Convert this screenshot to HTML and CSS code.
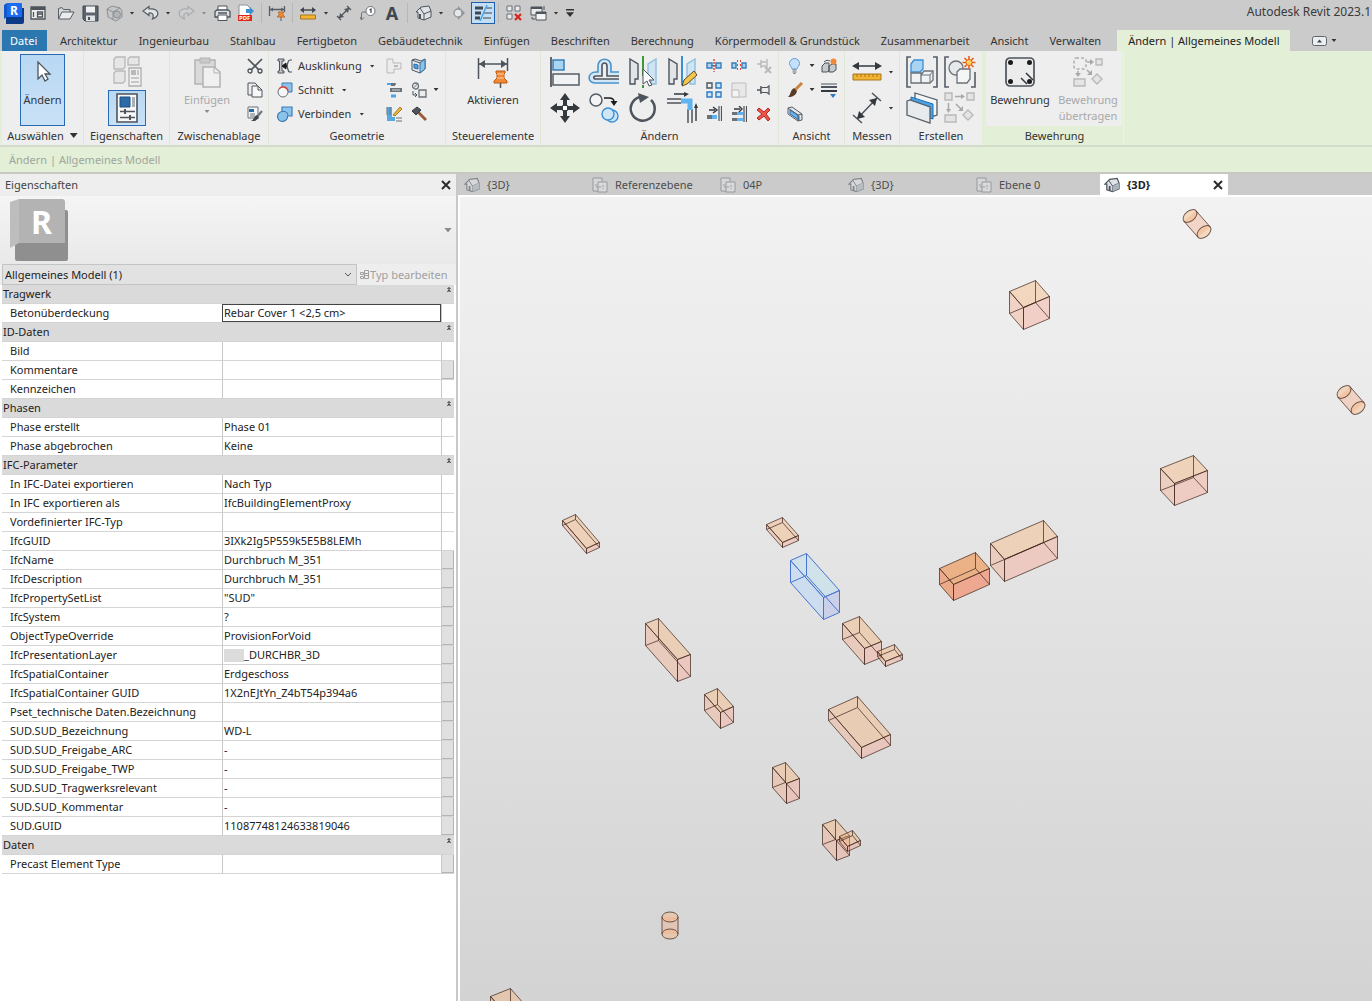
FILE: index.html
```html
<!DOCTYPE html>
<html lang="de">
<head>
  <meta charset="UTF-8">
  <meta name="viewport" content="width=device-width, initial-scale=1.0">
  <title>Autodesk Revit 2023.1</title>
  <link rel="stylesheet" href="styles.css">
</head>
<body>

  <header class="titlebar">
    <div class="quick-access">
      <button class="qa app" aria-label="Revit">
        <svg width="22" height="22" viewBox="0 0 22 22"><path d="M3 6h18v14a2 2 0 0 1-2 2H3z" fill="#0c3a86"/><path d="M1 3l3-2v14l-3 2z" fill="#1259c9"/><path d="M4 1h14a1 1 0 0 1 1 1v13H4z" fill="#1b6bf2"/><text x="7" y="13" class="logo-letter">R</text></svg>
      </button>
      <button class="qa" aria-label="Startseite">
        <svg width="16" height="16" viewBox="0 0 16 16"><path d="M1 2h14v12H1z" fill="#eee" stroke="#4d545c" stroke-width="1.300"/><path d="M1 2h14v3H1z" fill="#4d545c"/><path d="M3.500 7v5M7.500 7h5v5h-5zM7.500 9h5" stroke="#4d545c" stroke-width="1.300" fill="none"/></svg>
      </button>
      <span class="qa-gap"></span>
      <button class="qa" aria-label="Öffnen">
        <svg width="18" height="16" viewBox="0 0 18 16"><path d="M1.500 14V3.500L5 2.500l1.500 2H13V7" fill="#d5d8db" stroke="#555d66"/><path d="M1.500 14L5 7h12l-4 7z" fill="#e9ebec" stroke="#555d66"/></svg>
      </button>
      <button class="qa" aria-label="Speichern">
        <svg width="17" height="17" viewBox="0 0 17 17"><path d="M1 1h15v15H3l-2-2z" fill="#5c646d" stroke="#3f464d"/><path d="M4 1.500h9v6H4z" fill="#eef0f2"/><path d="M4 10.500h9V16H4z" fill="#dfe2e5"/><path d="M6 12h2v3H6z" fill="#4d545c"/></svg>
      </button>
      <button class="qa" aria-label="Synchronisieren" disabled>
        <svg width="17" height="17" viewBox="0 0 17 17"><path d="M1 4l5-3 8 2 2 3v6l-6 4-8-4z" fill="#c4c6c8" stroke="#8d9093"/><path d="M1 4l6 3v8M7 7l7-4" stroke="#8d9093" fill="none"/><circle cx="11" cy="9.500" r="3.500" fill="#b2b5b8" stroke="#8d9093"/></svg>
      </button>
      <button class="qa-drop" aria-label="Synchronisieren Menü"><i class="caret"></i></button>
      <button class="qa" aria-label="Rückgängig">
        <svg width="17" height="16" viewBox="0 0 17 16"><path d="M7 1.500L1 6l6 4.500V8c4-.5 5 2 3.500 6 4-1.500 6-4 5-7-1-2.500-4-3.500-8.500-3z" fill="#e2e4e6" stroke="#555d66" stroke-width="1.200"/></svg>
      </button>
      <button class="qa-drop" aria-label="Rückgängig Menü"><i class="caret"></i></button>
      <button class="qa" aria-label="Wiederherstellen" disabled>
        <svg width="17" height="16" viewBox="0 0 17 16"><path d="M10 1.500L16 6l-6 4.500V8c-4-.5-5 2-3.500 6-4-1.500-6-4-5-7 1-2.500 4-3.500 8.500-3z" fill="#cdcfd0" stroke="#a9acae" stroke-width="1.200"/></svg>
      </button>
      <button class="qa-drop" aria-label="Wiederherstellen Menü"><i class="caret soft"></i></button>
      <button class="qa" aria-label="Drucken">
        <svg width="17" height="17" viewBox="0 0 17 17"><path d="M4 1h9v5H4z" fill="#fff" stroke="#4d545c"/><path d="M1 6.500l2-1.500h11l2 1.500V12H1z" fill="#dfe2e5" stroke="#4d545c" stroke-width="1.300"/><path d="M4 10h9v5.500H4z" fill="#fff" stroke="#4d545c"/><path d="M4 8h9" stroke="#4d545c" stroke-width="1.500"/></svg>
      </button>
      <button class="qa" aria-label="PDF">
        <svg width="18" height="18" viewBox="0 0 18 18"><path d="M2 1h8l3 3v12H2z" fill="#fff" stroke="#8d9399"/><path d="M9 5h4V3l4 4-4 4V9H9z" fill="#3c8fd0"/><path d="M1 11h14v6H1z" fill="#e2231a"/><text x="2" y="16" class="pdf-letter">PDF</text></svg>
      </button>
      <span class="qa-sep"></span>
      <button class="qa" aria-label="Steuerelemente aktivieren">
        <svg width="18" height="16" viewBox="0 0 18 16"><path d="M1.500 1v10M16.500 1v6M2 4.500h14" stroke="#555d66" stroke-width="1.300"/><path d="M2 4.500l3-2v4zM16 4.500l-3-2v4z" fill="#555d66"/><path d="M10 7h6l-1 1v2l2 2H9l2-2V8z" fill="#f08a36" stroke="#b85a14" stroke-width=".7"/><path d="M13 12v4" stroke="#555d66"/></svg>
      </button>
      <span class="qa-sep"></span>
      <button class="qa" aria-label="Messen">
        <svg width="16" height="14" viewBox="0 0 16 14"><path d="M2 4h12" stroke="#3f464d" stroke-width="1.400"/><path d="M0 4l4-3v6zM16 4l-4-3v6z" fill="#3f464d"/><path d="M.5 9h15v4H.5z" fill="#f3b434" stroke="#a8761a"/></svg>
      </button>
      <button class="qa-drop" aria-label="Messen Menü"><i class="caret"></i></button>
      <button class="qa" aria-label="Ausgerichtete Bemaßung">
        <svg width="16" height="16" viewBox="0 0 16 16"><path d="M3 13L13 3M1 11l4 4M11 1l4 4" stroke="#4d545c" stroke-width="1.300"/><path d="M3 13l1-5 4 4zM13 3l-1 5-4-4z" fill="#4d545c"/></svg>
      </button>
      <button class="qa" aria-label="Nach Kategorie beschriften">
        <svg width="16" height="16" viewBox="0 0 16 16"><circle cx="10.500" cy="6" r="4.500" fill="#fff" stroke="#6a727a"/><path d="M6 7H3c-1 0-1.500.5-1.500 2v5M0 12l1.500 3L4 12.500" stroke="#6a727a" fill="none"/><path d="M9.500 5l1.500-1v4" stroke="#3f464d" stroke-width="1.200" fill="none"/></svg>
      </button>
      <button class="qa text-tool" aria-label="Text">A</button>
      <span class="qa-sep"></span>
      <button class="qa" aria-label="3D-Ansicht">
        <svg width="17" height="16" viewBox="0 0 17 16"><path d="M1 7l5-5 8-1 2 5v6l-7 3-6-2V7z" fill="#dfe3e7" stroke="#4d545c"/><path d="M1 7l4-4 4 6v6M9 9l7-3" stroke="#4d545c" fill="none"/><path d="M5 9v5" stroke="#4d545c" stroke-width="2"/></svg>
      </button>
      <button class="qa-drop" aria-label="3D-Ansicht Menü"><i class="caret"></i></button>
      <button class="qa" aria-label="Schnitt">
        <svg width="14" height="14" viewBox="0 0 14 14"><path d="M6 0l7 7-7 7z" fill="#8f959b"/><circle cx="6" cy="7" r="4" fill="#e4e6e8" stroke="#8f959b" stroke-width="1.300"/></svg>
      </button>
      <button class="qa qa-on" aria-label="Dünne Linien">
        <svg width="17" height="16" viewBox="0 0 17 16"><path d="M0 3h8M0 8h6M0 13h5" stroke="#3f464d" stroke-width="3"/><path d="M11 3h6M9 8h8M8 13h8" stroke="#3f464d"/><path d="M12 0L5 16" stroke="#4aa3e6" stroke-width="1.500"/></svg>
      </button>
      <span class="qa-sep"></span>
      <button class="qa" aria-label="Inaktive Ansichten schließen">
        <svg width="16" height="16" viewBox="0 0 16 16"><path d="M1 1h5v5H1zM9 1h5v5H9zM1 9h5v5H1z" fill="#e9ebec" stroke="#6a727a"/><path d="M9 9l6 6M15 9l-6 6" stroke="#d9261c" stroke-width="2.200"/></svg>
      </button>
      <button class="qa" aria-label="Fenster wechseln">
        <svg width="17" height="16" viewBox="0 0 17 16"><path d="M1 2h11v8H1z" fill="#e9ebec" stroke="#4d545c"/><path d="M1 2h11v2H1z" fill="#4d545c"/><path d="M6 7h10v8H6z" fill="#f4f5f5" stroke="#4d545c"/><path d="M6 7h10v2H6z" fill="#4d545c"/><path d="M2 12v2h3M14 1v4" stroke="#4d545c" fill="none"/></svg>
      </button>
      <button class="qa-drop" aria-label="Fenster Menü"><i class="caret"></i></button>
      <button class="qa-drop last" aria-label="Schnellzugriff anpassen"><i class="caret wide lined"></i></button>
    </div>
    <div class="app-title">Autodesk Revit 2023.1</div>
  </header>

  <nav class="tabs">
    <a href="#" class="file">Datei</a>
    <a href="#">Architektur</a>
    <a href="#">Ingenieurbau</a>
    <a href="#">Stahlbau</a>
    <a href="#">Fertigbeton</a>
    <a href="#">Gebäudetechnik</a>
    <a href="#">Einfügen</a>
    <a href="#">Beschriften</a>
    <a href="#">Berechnung</a>
    <a href="#">Körpermodell &amp; Grundstück</a>
    <a href="#">Zusammenarbeit</a>
    <a href="#">Ansicht</a>
    <a href="#">Verwalten</a>
    <a href="#" class="active">Ändern | Allgemeines Modell</a>
    <button class="ribbon-toggle" aria-label="Multifunktionsleiste minimieren">
      <svg width="15" height="10" viewBox="0 0 15 10"><rect x=".5" y=".5" width="14" height="9" rx="2" fill="#eceef0" stroke="#5c646d"/><path d="M5 6.500L7.500 3.500 10 6.500z" fill="#3f464d"/></svg>
      <i class="caret"></i>
    </button>
  </nav>

  <section class="ribbon">
    <div class="panel p-select">
      <div class="panel-body">
        <button class="large pressed">
          <svg width="32" height="32" viewBox="0 0 32 32"><path d="M11 6v17l4-4 3 6 3-2-3-5h5z" fill="#fff" stroke="#4d545c" stroke-width="1.300"/></svg>
          <span>Ändern</span>
        </button>
      </div>
      <div class="panel-title">Auswählen <i class="caret wide"></i></div>
    </div>

    <div class="panel p-props">
      <div class="panel-body stack">
        <button class="tool" aria-label="Typeneigenschaften" disabled>
          <svg width="32" height="32" viewBox="0 0 32 32"><path d="M3 3l2-2h9v10l-2 2H3zM17 3l2-2h9v8H17zM3 17l2-2h9v10l-2 2H3z" fill="#e6e6e6" stroke="#b9b9b9" stroke-width="1.300"/><path d="M18 12h12v18H18z" fill="#f0f0f0" stroke="#b0b0b0" stroke-width="1.300"/><path d="M20 14h5v5h-5z" fill="#b9b9b9"/><path d="M27 14v5M20 22h8M20 26h8" stroke="#b9b9b9" stroke-width="1.500"/></svg>
        </button>
        <button class="tool pressed wide-tool" aria-label="Eigenschaften">
          <svg width="32" height="32" viewBox="0 0 32 32"><path d="M6 2h20v28H6z" fill="#f7f7f7" stroke="#4d545c" stroke-width="1.600"/><path d="M9 5h10v10H9z" fill="#2c6aa8" stroke="#1f4f80"/><path d="M21 5h3v10h-3z" fill="#a9b0b7"/><path d="M9 19.500h15M9 25.500h15" stroke="#4d545c" stroke-width="1.300"/><path d="M14 17v5M19 23v5" stroke="#4d545c" stroke-width="2"/></svg>
        </button>
      </div>
      <div class="panel-title">Eigenschaften</div>
    </div>

    <div class="panel p-clip">
      <div class="panel-body">
        <button class="large" disabled>
          <svg width="32" height="32" viewBox="0 0 32 32"><path d="M4 4h20v24H4z" fill="#dadada" stroke="#b3b3b3" stroke-width="1.500"/><path d="M9 2h10v5H9z" fill="#c9c9c9" stroke="#b3b3b3"/><path d="M12 11h11l6 5v15H12z" fill="#f0f0f0" stroke="#b3b3b3" stroke-width="1.500"/><path d="M23 11v6h6" fill="none" stroke="#b3b3b3"/></svg>
          <span>Einfügen</span>
          <i class="caret soft"></i>
        </button>
        <div class="small-col">
          <button class="small" aria-label="Ausschneiden"><svg width="16" height="16" viewBox="0 0 16 16"><path d="M1 1l11 11M15 1L4 12" stroke="#4d545c" stroke-width="1.700"/><circle cx="3" cy="13" r="2" fill="none" stroke="#4d545c" stroke-width="1.300"/><circle cx="13" cy="13" r="2" fill="none" stroke="#4d545c" stroke-width="1.300"/></svg></button>
          <button class="small" aria-label="Kopieren"><svg width="16" height="16" viewBox="0 0 16 16"><path d="M1 1h7l2 2v10H1z" fill="#eee" stroke="#4d545c"/><path d="M5 4h6l4 4v7H5z" fill="#f7f7f7" stroke="#4d545c"/><path d="M11 4v4h4" fill="none" stroke="#4d545c"/></svg></button>
          <button class="small" aria-label="Eigenschaften anpassen"><svg width="16" height="16" viewBox="0 0 16 16"><path d="M1 1h10v11H1z" fill="#f4f4f4" stroke="#6a727a"/><path d="M2 3h5v3H2z" fill="#2c6aa8"/><path d="M3 8h5M3 10h5" stroke="#6a727a"/><path d="M15 5l-5 6" stroke="#6a727a" stroke-width="2"/><path d="M10 9l2 3-4 3H4c3-1 3-5 6-6z" fill="#3f464d"/></svg></button>
        </div>
      </div>
      <div class="panel-title">Zwischenablage</div>
    </div>

    <div class="panel p-geo">
      <div class="panel-body">
        <div class="small-col labelled">
          <button class="small"><svg width="16" height="16" viewBox="0 0 16 16"><path d="M1 1h6v2H5v10h2v2H1v-2h1.500V3H1z" fill="#c6cacd" stroke="#4d545c"/><path d="M15 2h-2c-3 0-1 4-4 6 3 1 1 6 4 6h2" fill="none" stroke="#4d545c" stroke-width="1.200"/><path d="M5 8l4-3v6zM8 8h3" fill="#1c1c1c" stroke="#1c1c1c"/></svg><span>Ausklinkung</span><i class="caret"></i></button>
          <button class="small"><svg width="16" height="16" viewBox="0 0 16 16"><path d="M5 1h10v9H5z" fill="#8cc3ea" stroke="#3a7db5"/><circle cx="6" cy="10" r="5" fill="#f6f6f6" stroke="#6a727a"/><path d="M2 7a5 5 0 0 1 9 2" fill="none" stroke="#e0453a" stroke-width="1.300"/></svg><span>Schnitt</span><i class="caret"></i></button>
          <button class="small"><svg width="16" height="16" viewBox="0 0 16 16"><path d="M5 1h10v9h-4.500A5 5 0 1 1 5 5.500z" fill="#8cc3ea" stroke="#3a7db5" stroke-width="1.200"/><path d="M5 5.500h3a4 4 0 0 1 3 4" fill="none" stroke="#3a7db5"/></svg><span>Verbinden</span><i class="caret"></i></button>
        </div>
        <div class="small-col">
          <button class="small" aria-label="Trägerverbindung" disabled><svg width="16" height="16" viewBox="0 0 16 16"><path d="M1 1h6v4h8v6H8v4H1z" fill="#ececec" stroke="#b9b9b9"/><path d="M8 8h4" stroke="#b9b9b9" stroke-width="2"/></svg></button>
          <button class="small" aria-label="Wandverbindung"><svg width="16" height="16" viewBox="0 0 16 16"><path d="M1 2h4M7 2h3" stroke="#4aa3e6" stroke-width="2"/><path d="M5 1h4v3H5zM4 6h12v4H4z" fill="#6a727a"/><path d="M6 8h8" stroke="#cfd3d6"/><path d="M5 14h5" stroke="#4aa3e6" stroke-width="3"/></svg></button>
          <button class="small" aria-label="Teilen"><svg width="16" height="16" viewBox="0 0 16 16"><path d="M1 1v14h8v-4H6V1z" fill="#58a9e0"/><path d="M1 1v8M4 1v8M10 12h6M10 15h6" stroke="#6a727a"/><path d="M7 9l7-8 2 2-7 7z" fill="#f3b434" stroke="#7a5a1a" stroke-width=".7"/></svg></button>
        </div>
        <div class="small-col">
          <button class="small" aria-label="Fläche teilen"><svg width="16" height="16" viewBox="0 0 16 16"><path d="M1 2l3-1 6 2 4-2v10l-5 4-8-3z" fill="#e6e9ec" stroke="#4d545c"/><path d="M9 5l5-4v10l-5 4z" fill="#8cc3ea" stroke="#3a6f9d"/><path d="M1 2l8 3" stroke="#4d545c"/><path d="M3 6l4 1v4l-4-1z" fill="#4aa3e6" stroke="#2c6aa8"/></svg></button>
          <button class="small" aria-label="Verbindung aufheben"><svg width="16" height="16" viewBox="0 0 16 16"><circle cx="4.500" cy="4" r="3" fill="#ececec" stroke="#6a727a" stroke-width="1.300"/><path d="M2.500 6l4-4" stroke="#6a727a"/><path d="M8 8h7v7H8z" fill="#ececec" stroke="#6a727a" stroke-width="1.300"/><path d="M2 9v4h4M4 11l2 2-2 2" fill="none" stroke="#4d545c"/></svg></button>
          <button class="small" aria-label="Abbruch"><svg width="16" height="16" viewBox="0 0 16 16"><path d="M7 6l8 8" stroke="#9a5b3c" stroke-width="3"/><path d="M1 5l5-4 4 3-5 5z" fill="#4d545c" stroke="#33393f"/></svg></button>
        </div>
        <div class="small-col carets">
          <i class="caret blank"></i>
          <i class="caret"></i>
          <i class="caret blank"></i>
        </div>
      </div>
      <div class="panel-title">Geometrie</div>
    </div>

    <div class="panel p-control">
      <div class="panel-body">
        <button class="large">
          <svg width="32" height="32" viewBox="0 0 32 32"><path d="M1.500 2v21M30.500 2v13M2 8h28" stroke="#4d545c" stroke-width="1.500"/><path d="M2 8l6-4v8zM30 8l-6-4v8z" fill="#4d545c"/><path d="M19 15h9v2l-1 1v4l3 3v2H17v-2l3-3v-4l-1-1z" fill="#f08a36" stroke="#b85a14"/><path d="M20 18h7M20 22h7" stroke="#ffd0a0"/><path d="M23.500 27v5" stroke="#4d545c" stroke-width="1.500"/></svg>
          <span>Aktivieren</span>
        </button>
      </div>
      <div class="panel-title">Steuerelemente</div>
    </div>

    <div class="panel p-modify">
      <div class="panel-body">
        <div class="large-grid">
          <button class="tool" aria-label="Ausrichten"><svg width="32" height="32" viewBox="0 0 32 32"><path d="M2 1v30" stroke="#33393f" stroke-width="1.500"/><path d="M4 4h11v10H4z" fill="#a9d4f2" stroke="#3a7db5" stroke-width="1.500"/><path d="M4 18h26v11H4z" fill="#f1f2f3" stroke="#555d66" stroke-width="1.500"/></svg></button>
          <button class="tool" aria-label="Versatz"><svg width="32" height="32" viewBox="0 0 32 32"><path d="M31 27H7c-8 0-8-11 1-11h2V10c0-9 13-9 13 0v6h8" fill="#d5e8f6" stroke="#4a93cb" stroke-width="1.600"/><path d="M31 23H8c-3 0-3-3 0-3h6V10c0-4 5-4 5 0v10h12" fill="#eee" stroke="#4d545c" stroke-width="1.600"/></svg></button>
          <button class="tool" aria-label="Spiegeln Achse wählen"><svg width="32" height="32" viewBox="0 0 32 32"><path d="M3 3l8 5v15H8v5H3z" fill="#e2e5e8" stroke="#4d545c" stroke-width="1.400"/><path d="M29 3l-8 5v15h3v5h5z" fill="#cfe4f3" stroke="#8fbfe0" stroke-width="1.400"/><path d="M16 0v20M16 29v3" stroke="#3d9a3a" stroke-width="2"/><path d="M16 13v15l4-3 2 5 3-1-3-5h5z" fill="#fff" stroke="#4d545c"/></svg></button>
          <button class="tool" aria-label="Spiegeln Achse zeichnen"><svg width="32" height="32" viewBox="0 0 32 32"><path d="M3 3l8 5v15H8v5H3z" fill="#e2e5e8" stroke="#4d545c" stroke-width="1.400"/><path d="M29 3l-8 5v15h3v5h5z" fill="#cfe4f3" stroke="#8fbfe0" stroke-width="1.400"/><path d="M16 0v29" stroke="#3a8fd6" stroke-width="2"/><path d="M16 30l2-6 10-9 3 4-10 9z" fill="#f7c548" stroke="#5a4a2a"/></svg></button>
          <button class="tool" aria-label="Verschieben"><svg width="32" height="32" viewBox="0 0 32 32"><path d="M16 1l5 7h-3v5h-4V8h-3zM16 31l5-7h-3v-5h-4v5h-3zM1 16l7-5v3h5v4H8v3zM31 16l-7-5v3h-5v4h5v3z" fill="#33393f"/><path d="M13.500 13.500h5v5h-5z" fill="#fff" stroke="#33393f"/></svg></button>
          <button class="tool" aria-label="Kopieren"><svg width="32" height="32" viewBox="0 0 32 32"><circle cx="8" cy="8" r="6" fill="#f4f4f4" stroke="#555d66" stroke-width="1.500"/><path d="M16 6h5c4 0 5 2 5 4" fill="none" stroke="#1c1c1c" stroke-width="1.500"/><path d="M22.500 9h7L26 14z" fill="#1c1c1c"/><circle cx="24" cy="24" r="6" fill="#cfe6f6" stroke="#3a8fd6" stroke-width="1.400"/><circle cx="20" cy="22" r="6" fill="#cfe6f6" stroke="#3a8fd6" stroke-width="1.400"/></svg></button>
          <button class="tool" aria-label="Drehen"><svg width="32" height="32" viewBox="0 0 32 32"><path d="M24 8a12 12 0 1 1-11-3" fill="none" stroke="#4d545c" stroke-width="2.500"/><path d="M11 1l11 4-9 6z" fill="#4d545c"/></svg></button>
          <button class="tool" aria-label="Stutzen"><svg width="32" height="32" viewBox="0 0 32 32"><path d="M1 7h14M1 11h14M22 17v14M26 17v14" stroke="#4d545c" stroke-width="1.500"/><path d="M15 9h9v9" fill="none" stroke="#5db4f0" stroke-width="5"/><path d="M8 2h12M30 29V14" stroke="#33393f" stroke-width="1.400"/><path d="M18 0l5 2-5 3zM28 16l2-5 2 5z" fill="#33393f"/></svg></button>
        </div>
        <div class="small-grid">
          <button class="small" aria-label="Element teilen"><svg width="16" height="16" viewBox="0 0 16 16"><path d="M1 5h5v5H1zM10 5h5v5h-5z" fill="#a9d4f2" stroke="#3a7db5" stroke-width="1.400"/><path d="M5 7.500h6" stroke="#3a7db5"/><path d="M8 1v13" stroke="#e0453a" stroke-width="1.400" stroke-dasharray="2 1"/></svg></button>
          <button class="small" aria-label="Mit Lücke teilen"><svg width="16" height="16" viewBox="0 0 16 16"><path d="M1 5h4v5H1zM11 5h4v5h-4z" fill="#a9d4f2" stroke="#3a7db5" stroke-width="1.400"/><path d="M6.500 2v12M9.500 2v12" stroke="#e0453a" stroke-dasharray="2 2"/></svg></button>
          <button class="small" aria-label="Lösen" disabled><svg width="16" height="16" viewBox="0 0 16 16"><path d="M1 6h4M5 2v8M5 4h5M5 8h5M11 1v9" stroke="#b9b9b9" stroke-width="1.400"/><path d="M9 9l6 6M15 9l-6 6" stroke="#b9b9b9" stroke-width="2"/></svg></button>
          <button class="small" aria-label="Reihe"><svg width="16" height="16" viewBox="0 0 16 16"><path d="M1 1h5v5H1z" fill="#eee" stroke="#4d545c" stroke-width="1.400"/><path d="M10 1h5v5h-5zM1 10h5v5H1zM10 10h5v5h-5z" fill="#cfe6f6" stroke="#2c7bc0" stroke-width="1.400"/></svg></button>
          <button class="small" aria-label="Maßstab" disabled><svg width="16" height="16" viewBox="0 0 16 16"><path d="M1 1h14v14H1z" fill="#e8e8e8" stroke="#bdbdbd"/><path d="M1 8h7v7H1z" fill="#f4f4f4" stroke="#bdbdbd"/></svg></button>
          <button class="small" aria-label="Fixieren"><svg width="16" height="16" viewBox="0 0 16 16"><path d="M1 8h4M5 4v8" stroke="#4d545c" stroke-width="1.400"/><path d="M5 6l2-.5h4L13 4v8l-2-1.500H7L5 10z" fill="#ececec" stroke="#4d545c" stroke-width="1.200"/></svg></button>
          <button class="small" aria-label="Einzelnes Element stutzen"><svg width="16" height="16" viewBox="0 0 16 16"><path d="M1 9h5v4H1z" fill="#6a727a"/><path d="M6 9h5v4H6z" fill="#5db4f0"/><path d="M13 0v15M15.500 0v15" stroke="#4d545c" stroke-width="1.200"/><path d="M3 4h6M7 1l4 3-4 3" fill="none" stroke="#33393f" stroke-width="1.400"/></svg></button>
          <button class="small" aria-label="Mehrere Elemente stutzen"><svg width="16" height="16" viewBox="0 0 16 16"><path d="M1 6h5v3H1zM1 12h5v3H1z" fill="#6a727a"/><path d="M6 6h6v3H6zM6 12h6v3H6z" fill="#5db4f0"/><path d="M13 0v16M15.500 0v16" stroke="#4d545c" stroke-width="1.200"/><path d="M3 3h6M8 0l3 3-3 3" fill="none" stroke="#33393f" stroke-width="1.400"/></svg></button>
          <button class="small" aria-label="Löschen"><svg width="16" height="16" viewBox="0 0 16 16"><path d="M3 2l5 4 4-4 2 2-4 4 4 5-2 2-4-5-5 4-2-2 5-4-5-4z" fill="#e8564c" stroke="#b8231a"/></svg></button>
        </div>
      </div>
      <div class="panel-title">Ändern</div>
    </div>

    <div class="panel p-view">
      <div class="panel-body">
        <div class="small-col">
          <button class="small" aria-label="Ausblenden"><svg width="16" height="16" viewBox="0 0 16 16"><path d="M5 11c0-2-2.500-3-2.500-5.500a5 5 0 0 1 10 0C12.500 8 10 9 10 11z" fill="#c4e0fa" stroke="#5f9fd6"/><path d="M5.500 12h4M5.500 14h4M6.500 15.500h2" stroke="#6a727a"/></svg></button>
          <button class="small" aria-label="Grafik überschreiben"><svg width="16" height="16" viewBox="0 0 16 16"><path d="M15 1L8 8" stroke="#c8833c" stroke-width="3"/><path d="M7 6l3 3c-1 4-4 6-9 6 3-2 2-7 6-9z" fill="#5a3a22"/></svg></button>
          <button class="small" aria-label="Auswahlbox"><svg width="16" height="16" viewBox="0 0 16 16"><path d="M1 2l4-1 10 7v6l-4 1L1 8z" fill="#e2e6e9" stroke="#555d66"/><path d="M3 4l9 6v4L3 8z" fill="#6cb4ea" stroke="#2c6aa8"/><path d="M1 2l10 7v6M11 9l4-1" fill="none" stroke="#555d66"/></svg></button>
        </div>
        <div class="small-col carets">
          <i class="caret"></i>
          <i class="caret"></i>
          <i class="caret blank"></i>
        </div>
        <div class="small-col">
          <button class="small" aria-label="Element verschieben"><svg width="16" height="16" viewBox="0 0 16 16"><path d="M1 8l3-3h4v8l-2 1H1zM8 8l3-2h4v6l-3 2H8z" fill="#c6cacd" stroke="#4d545c"/><path d="M3 4c2-2 4-2 6-1" fill="none" stroke="#4d545c"/><circle cx="12.500" cy="3.500" r="3" fill="#f08a36"/></svg></button>
          <button class="small" aria-label="Linienart"><svg width="16" height="16" viewBox="0 0 16 16"><path d="M0 2h16" stroke="#4d545c"/><path d="M0 5h16" stroke="#4d545c" stroke-width="2"/><path d="M0 9h16" stroke="#33393f" stroke-width="2"/><path d="M9 12h6l-3 4z" fill="#2c7bc0"/></svg></button>
          <span class="small"></span>
        </div>
      </div>
      <div class="panel-title">Ansicht</div>
    </div>

    <div class="panel p-measure">
      <div class="panel-body stack">
        <button class="tool with-caret" aria-label="Zwischen zwei Referenzen messen"><svg width="32" height="32" viewBox="0 0 32 32"><path d="M4 10h24" stroke="#33393f" stroke-width="1.500"/><path d="M1 10l7-4v8zM31 10l-7-4v8z" fill="#33393f"/><path d="M2 18h28v6H2z" fill="#f3b434" stroke="#a8761a"/><path d="M6 18v3M10 18v3M14 18v3M18 18v3M22 18v3M26 18v3" stroke="#a8761a"/></svg><i class="caret"></i></button>
        <button class="tool with-caret" aria-label="Bemaßung"><svg width="32" height="32" viewBox="0 0 32 32"><path d="M6 27L26 6M2 23l9 8M21 1l9 8" stroke="#4d545c" stroke-width="1.500"/><path d="M6 27l2-8 6 6zM26 6l-2 8-6-6z" fill="#33393f"/></svg><i class="caret"></i></button>
      </div>
      <div class="panel-title">Messen</div>
    </div>

    <div class="panel p-create">
      <div class="panel-body large-grid">
        <button class="tool" aria-label="Gruppe erstellen"><svg width="32" height="32" viewBox="0 0 32 32"><path d="M5 1H1v30h4M27 1h4v30h-4" fill="none" stroke="#555d66" stroke-width="1.600"/><path d="M5 8l3-4h9v9l-3 3H5z" fill="#a9d4f2" stroke="#3a8fd6" stroke-width="1.300"/><path d="M5 17h10v10H5zM15 19l3-4h9v9l-3 3h-9z" fill="#f1f2f3" stroke="#6a727a" stroke-width="1.300"/><path d="M15 19h9v8M24 19l3-4" fill="none" stroke="#6a727a"/></svg></button>
        <button class="tool" aria-label="Ähnliches erstellen"><svg width="32" height="32" viewBox="0 0 32 32"><path d="M5 1H1v30h4M27 31h4V16" fill="none" stroke="#555d66" stroke-width="1.600"/><circle cx="12" cy="12" r="7" fill="#e6e8ea" stroke="#6a727a" stroke-width="1.300"/><path d="M13 16l3-3h10v10l-3 4H13z" fill="#f4f5f5" stroke="#6a727a" stroke-width="1.300"/><path d="M25 0v13M18.500 6.500h13M20.500 2l9 9M29.500 2l-9 9" stroke="#e8601a" stroke-width="1.600"/><circle cx="25" cy="6.500" r="3" fill="#ffd75a" stroke="#e8601a"/></svg></button>
        <button class="tool" aria-label="Teile erstellen"><svg width="32" height="32" viewBox="0 0 32 32"><path d="M9 1l22 7v15l-3 1L9 17z" fill="#f4f5f5" stroke="#555d66" stroke-width="1.300"/><path d="M5 5l22 7v15L5 20z" fill="#4aa3e6" stroke="#1f6fb5"/><path d="M1 9l3-1 20 7v16L1 23z" fill="#e8ebee" stroke="#555d66" stroke-width="1.300"/></svg></button>
        <button class="tool" aria-label="Baugruppe übertragen" disabled><svg width="32" height="32" viewBox="0 0 32 32"><path d="M1 1h7v7H1zM23 1h7v7h-7zM1 23h11v7H1zM24 18l5 5-5 5-5-5z" fill="#e4e4e4" stroke="#b9b9b9" stroke-width="1.400"/><path d="M11 4.500h7M4.500 11v7M12 12l6 6" stroke="#a9a9a9" stroke-width="1.500"/><path d="M17 2l4 2.500L17 7zM2 17l2.500 4L7 17zM19 14v5h-5z" fill="#a9a9a9"/></svg></button>
      </div>
      <div class="panel-title">Erstellen</div>
    </div>

    <div class="panel p-rebar">
      <div class="panel-body">
        <button class="large">
          <svg width="32" height="32" viewBox="0 0 32 32"><rect x="2" y="2" width="28" height="28" rx="4" fill="#ececec" stroke="#4d545c" stroke-width="1.700"/><circle cx="6.500" cy="6.500" r="2.500" fill="#1c1c1c"/><circle cx="25.500" cy="6.500" r="2.500" fill="#1c1c1c"/><circle cx="6.500" cy="25.500" r="2.500" fill="#1c1c1c"/><circle cx="25.500" cy="25.500" r="2.500" fill="#1c1c1c"/><path d="M17 22l6 6M22 17l7 7" stroke="#33393f" stroke-width="1.500"/></svg>
          <span>Bewehrung</span>
        </button>
        <button class="large" disabled>
          <svg width="32" height="32" viewBox="0 0 32 32"><rect x="2" y="2" width="12" height="11" rx="2" fill="none" stroke="#b0b0b0" stroke-width="1.500" stroke-dasharray="3 2"/><path d="M24 3h6v6h-6zM2 23h11v7H2zM25 18l5 5-5 5-5-5z" fill="#e4e4e4" stroke="#b9b9b9" stroke-width="1.400"/><path d="M15 6h4M6 15v2M15 14l4 4" stroke="#a9a9a9" stroke-width="1.500"/><path d="M18 3l4 3-4 3zM3 17l3 4 3-4zM20 14v5h-5z" fill="#a9a9a9"/></svg>
          <span>Bewehrung übertragen</span>
        </button>
      </div>
      <div class="panel-title">Bewehrung</div>
    </div>
  </section>

  <div class="options-bar">Ändern | Allgemeines Modell</div>

  <main class="workspace">
    <aside class="properties">
      <div class="palette-head">
        <h2>Eigenschaften</h2>
        <button class="close" aria-label="Schließen"><svg width="10" height="10" viewBox="0 0 10 10"><path d="M1 1l8 8M9 1L1 9" stroke="#2b2b2b" stroke-width="2"/></svg></button>
      </div>
      <div class="type-preview">
        <svg width="62" height="64" viewBox="0 0 62 64"><path d="M6 12h51a2 2 0 0 1 2 2v47a2 2 0 0 1-2 2H8a2 2 0 0 1-2-2z" fill="#8f8f8f"/><path d="M10 1h43a3 3 0 0 1 3 3v41H10z" fill="#b3b3b3"/><path d="M1 4l9-3v44l-9 5z" fill="#bdbdbd"/><text x="22" y="36" class="big-letter">R</text></svg>
        <i class="caret wide soft"></i>
      </div>
      <div class="type-row">
        <select aria-label="Filter">
          <option>Allgemeines Modell (1)</option>
        </select>
        <button disabled>
          <svg width="9" height="9" viewBox="0 0 9 9"><path d="M.5 2.500h3v2h-3zM.5 6.500h3v2h-3zM4.500 .5h4v8h-4zM4.500 3.500h4M4.500 5.500h4" fill="none" stroke="#a0a0a0"/></svg>
          Typ bearbeiten
        </button>
      </div>
      <table class="props">
        <colgroup>
          <col class="c-name">
          <col class="c-value">
          <col class="c-button">
        </colgroup>
        <tbody>
          <tr class="group"><th colspan="3">Tragwerk<i class="fold"></i></th></tr>
          <tr><th><label for="cover">Betonüberdeckung</label></th><td class="edit"><input id="cover" type="text" value="Rebar Cover 1 &lt;2,5 cm&gt;"></td><td></td></tr>
          <tr class="group"><th colspan="3">ID-Daten<i class="fold"></i></th></tr>
          <tr><th>Bild</th><td></td><td></td></tr>
          <tr><th>Kommentare</th><td></td><td><button aria-label="Kommentare zuordnen"></button></td></tr>
          <tr><th>Kennzeichen</th><td></td><td></td></tr>
          <tr class="group"><th colspan="3">Phasen<i class="fold"></i></th></tr>
          <tr><th>Phase erstellt</th><td>Phase 01</td><td></td></tr>
          <tr><th>Phase abgebrochen</th><td>Keine</td><td></td></tr>
          <tr class="group"><th colspan="3">IFC-Parameter<i class="fold"></i></th></tr>
          <tr><th>In IFC-Datei exportieren</th><td>Nach Typ</td><td></td></tr>
          <tr><th>In IFC exportieren als</th><td>IfcBuildingElementProxy</td><td></td></tr>
          <tr><th>Vordefinierter IFC-Typ</th><td></td><td></td></tr>
          <tr><th>IfcGUID</th><td>3IXk2Ig5P559k5E5B8LEMh</td><td></td></tr>
          <tr><th>IfcName</th><td>Durchbruch M_351</td><td><button aria-label="IfcName zuordnen"></button></td></tr>
          <tr><th>IfcDescription</th><td>Durchbruch M_351</td><td><button aria-label="IfcDescription zuordnen"></button></td></tr>
          <tr><th>IfcPropertySetList</th><td>"SUD"</td><td><button aria-label="IfcPropertySetList zuordnen"></button></td></tr>
          <tr><th>IfcSystem</th><td>?</td><td><button aria-label="IfcSystem zuordnen"></button></td></tr>
          <tr><th>ObjectTypeOverride</th><td>ProvisionForVoid</td><td><button aria-label="ObjectTypeOverride zuordnen"></button></td></tr>
          <tr><th>IfcPresentationLayer</th><td><span class="masked"></span>_DURCHBR_3D</td><td><button aria-label="IfcPresentationLayer zuordnen"></button></td></tr>
          <tr><th>IfcSpatialContainer</th><td>Erdgeschoss</td><td><button aria-label="IfcSpatialContainer zuordnen"></button></td></tr>
          <tr><th>IfcSpatialContainer GUID</th><td>1X2nEJtYn_Z4bT54p394a6</td><td><button aria-label="IfcSpatialContainer GUID zuordnen"></button></td></tr>
          <tr><th>Pset_technische Daten.Bezeichnung</th><td></td><td><button aria-label="Pset zuordnen"></button></td></tr>
          <tr><th>SUD.SUD_Bezeichnung</th><td>WD-L</td><td><button aria-label="Bezeichnung zuordnen"></button></td></tr>
          <tr><th>SUD.SUD_Freigabe_ARC</th><td>-</td><td><button aria-label="Freigabe ARC zuordnen"></button></td></tr>
          <tr><th>SUD.SUD_Freigabe_TWP</th><td>-</td><td><button aria-label="Freigabe TWP zuordnen"></button></td></tr>
          <tr><th>SUD.SUD_Tragwerksrelevant</th><td>-</td><td><button aria-label="Tragwerksrelevant zuordnen"></button></td></tr>
          <tr><th>SUD.SUD_Kommentar</th><td>-</td><td><button aria-label="Kommentar zuordnen"></button></td></tr>
          <tr><th>SUD.GUID</th><td>11087748124633819046</td><td><button aria-label="GUID zuordnen"></button></td></tr>
          <tr class="group"><th colspan="3">Daten<i class="fold"></i></th></tr>
          <tr><th>Precast Element Type</th><td></td><td><button aria-label="Precast Element Type zuordnen"></button></td></tr>
        </tbody>
      </table>
    </aside>

    <section class="documents">
      <svg class="defs" width="0" height="0">
        <symbol id="i-3d" viewBox="0 0 17 16"><path d="M1 7l5-5 8-1 2 5v6l-7 3-6-2V7z" fill="#dfe3e7" stroke="#4d545c" stroke-width="1.300"/><path d="M1 7l4-4 4 6v6M9 9l7-3" stroke="#4d545c" fill="none"/><path d="M6 9v5" stroke="#4d545c" stroke-width="2"/><path d="M9 9l7-3v6l-7 3z" fill="#aab4bd"/></symbol>
        <symbol id="i-plan" viewBox="0 0 16 16"><path d="M1 1h9v13H1z" fill="#e2e2e2" stroke="#6a727a"/><path d="M6 5h9v10H6z" fill="#e8e8e8" stroke="#6a727a"/><path d="M4 7v3h5M11 8v4" stroke="#6a727a" stroke-dasharray="2 1" fill="none"/></symbol>
      </svg>
      <div class="doc-tabs">
        <button><svg width="16" height="16"><use href="#i-3d"/></svg>{3D}</button>
        <button><svg width="16" height="16"><use href="#i-plan"/></svg>Referenzebene</button>
        <button><svg width="16" height="16"><use href="#i-plan"/></svg>04P</button>
        <button><svg width="16" height="16"><use href="#i-3d"/></svg>{3D}</button>
        <button><svg width="16" height="16"><use href="#i-plan"/></svg>Ebene 0</button>
        <button class="active"><svg width="16" height="16"><use href="#i-3d"/></svg>{3D}<svg class="x" width="10" height="10" viewBox="0 0 10 10"><path d="M1 1l8 8M9 1L1 9" stroke="#2b2b2b" stroke-width="2"/></svg></button>
      </div>
      <div class="view">
        <svg id="model" role="img" aria-label="3D-Modell"></svg>
      </div>
    </section>
  </main>

  <script src="script.js"></script>
</body>
</html>
```
FILE: styles.css
```css
* {
  box-sizing: border-box;
}

body {
  margin: 0;
  height: 100vh;
  display: flex;
  flex-direction: column;
  overflow: hidden;
  background: #cbcbcb;
  color: #333;
  font-family: "Noto Sans", "Open Sans", sans-serif;
  font-size: 11px;
  line-height: 16px;
}

button {
  font: inherit;
  color: inherit;
  padding: 0;
  border: 0;
  background: none;
}

svg {
  display: block;
  flex: none;
}

.caret {
  display: inline-block;
  flex: none;
  width: 5px;
  height: 3px;
  background: #333;
  clip-path: polygon(0 0, 100% 0, 50% 100%);
}

.caret.wide {
  width: 8px;
  height: 5px;
}

.caret.lined {
  height: 8px;
  clip-path: polygon(0 0, 100% 0, 100% 20%, 0 20%, 0 40%, 100% 40%, 50% 100%, 0 40%);
}

.caret.soft {
  background: #8a8a8a;
}

.caret.blank {
  visibility: hidden;
}

/* title bar */
.titlebar {
  display: flex;
  justify-content: space-between;
  height: 30px;
  flex: none;
}

.quick-access {
  display: flex;
  align-items: center;
  height: 26px;
  padding-left: 2px;
}

.qa {
  display: flex;
  align-items: center;
  justify-content: center;
  width: 24px;
  height: 22px;
}

.qa-on {
  background: #c3dff6;
  border: 1px solid #1f5fae;
}

.qa-drop {
  display: flex;
  align-items: center;
  justify-content: center;
  width: 12px;
  height: 22px;
}

.qa-drop.last {
  width: 16px;
}

.qa-gap {
  width: 4px;
}

.qa-sep {
  width: 1px;
  height: 20px;
  margin: 0 3px;
  background: #b7b7b7;
}

.text-tool {
  color: #3f464d;
  font-size: 18px;
  font-weight: bold;
}

.logo-letter {
  fill: #fff;
  font-size: 12px;
  font-weight: bold;
}

.pdf-letter {
  fill: #fff;
  font-size: 6px;
  font-weight: bold;
}

.app-title {
  padding: 4px 1px 0 0;
  color: #3a3a3a;
  font-size: 12px;
  white-space: nowrap;
}

/* ribbon tabs */
.tabs {
  display: flex;
  height: 21px;
  flex: none;
  padding-left: 2px;
  white-space: nowrap;
}

.tabs a {
  padding: 3px 10px 0 11px;
  color: #333;
  text-decoration: none;
}

.tabs .file {
  width: 45px;
  padding: 3px 8px 0;
  margin-right: 2px;
  background: #2b78b0;
  color: #fff;
}

.tabs .active {
  margin-left: 6px;
  padding: 3px 11px 0;
  background: #e3efd7;
  color: #222;
}

.ribbon-toggle {
  display: flex;
  align-items: center;
  gap: 4px;
  margin-left: 22px;
}

/* ribbon */
.ribbon {
  display: flex;
  flex: none;
  height: 96px;
  padding-left: 2px;
  background: #e3efd7;
  border-bottom: 2px solid #d3dcca;
}

.panel {
  display: flex;
  flex-direction: column;
  flex: none;
  padding-top: 3px;
  background: #eee;
  border-right: 1px solid #dfe8d6;
}

.panel-body {
  display: flex;
  justify-content: center;
  height: 72px;
}

.panel-title {
  height: 19px;
  padding-top: 2px;
  text-align: center;
  white-space: nowrap;
}

.panel-title .caret {
  margin-left: 3px;
  vertical-align: 2px;
}

.p-select { width: 82px; }
.p-props { width: 86px; }
.p-clip { width: 99px; }
.p-geo { width: 177px; }
.p-control { width: 95px; }
.p-modify { width: 238px; }
.p-view { width: 66px; }
.p-measure { width: 55px; }
.p-create { width: 86px; border-right: 4px solid #e3efd7; }
.p-rebar { width: 138px; border-right: 1px solid #edf3e6; }

.large {
  display: flex;
  flex-direction: column;
  align-items: center;
  height: 72px;
  padding-top: 2px;
}

.large span {
  margin-top: 4px;
}

.large .caret {
  margin-top: 2px;
}

.large:disabled,
.small:disabled {
  color: #a9a9a9;
}

.pressed {
  background: linear-gradient(#b9d8f3, #c9e1f6);
  border: 1px solid #2a6ab5;
}

.p-select .large {
  width: 45px;
  padding-top: 1px;
}

.stack {
  flex-direction: column;
  align-items: center;
}

.tool {
  display: flex;
  align-items: center;
  justify-content: center;
  height: 36px;
}

.wide-tool {
  width: 38px;
}

.with-caret {
  gap: 6px;
}

.p-clip .panel-body {
  justify-content: flex-start;
  padding-left: 12px;
  gap: 15px;
}

.p-clip .large {
  width: 50px;
}

.small-col {
  display: flex;
  flex-direction: column;
  flex: none;
}

.small {
  display: flex;
  align-items: center;
  gap: 5px;
  height: 24px;
}

.carets {
  width: 14px;
  align-items: center;
}

.carets .caret {
  margin: 10px 0 11px;
}

.p-geo .panel-body {
  justify-content: flex-start;
  padding-left: 8px;
  gap: 9px;
}

.p-geo .labelled {
  width: 100px;
}

.p-geo .small .caret {
  margin-left: 3px;
}

.p-geo .carets {
  margin-left: -7px;
}

.large-grid {
  display: grid;
  grid-template-columns: repeat(4, 39px);
  grid-template-rows: 36px 36px;
}

.small-grid {
  display: grid;
  grid-template-columns: repeat(3, 25px);
  justify-items: center;
}

.p-modify .panel-body {
  padding-left: 2px;
}

.p-create .large-grid {
  grid-template-columns: 38px 38px;
  justify-content: center;
}

.p-view .panel-body {
  justify-content: flex-start;
  padding-left: 8px;
}

.p-view .carets {
  width: 18px;
}

.p-rebar {
  background: #e3efd7;
}

.p-rebar .panel-body {
  margin: -3px 1px 0 0;
  padding-top: 3px;
  height: 75px;
  background: #eee;
}

.p-rebar .large {
  width: 68px;
}

.options-bar {
  flex: none;
  height: 27px;
  padding: 5px 9px 0;
  background: #e3efd7;
  border-bottom: 2px solid #c6c8c4;
  color: #a0a69b;
}

/* workspace */
.workspace {
  display: flex;
  flex: 1;
  min-height: 0;
}

.properties {
  width: 458px;
  flex: none;
  padding: 0 2px;
  background: #fff;
  border-right: 2px solid #c8c8c8;
  color: #222;
}

.palette-head {
  display: flex;
  justify-content: space-between;
  align-items: center;
  height: 22px;
  margin: 0 -2px;
  padding: 0 5px;
  background: #eee;
}

.palette-head h2 {
  margin: 0;
  color: #444;
  font-size: 11px;
  font-weight: normal;
}

.type-preview {
  display: flex;
  justify-content: space-between;
  align-items: center;
  height: 68px;
  margin: 0 -2px;
  padding: 0 4px 0 9px;
  background: linear-gradient(#f5f5f5, #e9e9e9);
}

.big-letter {
  fill: #fff;
  font-size: 32px;
  font-weight: bold;
}

.type-row {
  display: flex;
  height: 21px;
  margin: 0 -2px;
  padding-left: 2px;
  background: #eee;
}

.type-row select {
  width: 355px;
  padding: 0 2px;
  appearance: none;
  border: 1px solid #c4c4c4;
  border-radius: 0;
  background: #e2e2e2 url("data:image/svg+xml,%3Csvg xmlns='http://www.w3.org/2000/svg' width='8' height='5'%3E%3Cpath d='M1 1l3 3 3-3' fill='none' stroke='%23555'/%3E%3C/svg%3E") no-repeat right 4px center;
  color: #222;
  font: inherit;
}

.type-row button {
  display: flex;
  align-items: center;
  gap: 1px;
  padding-left: 3px;
  color: #a0a0a0;
  white-space: nowrap;
}

.props {
  width: 452px;
  border-collapse: separate;
  border-spacing: 0;
  table-layout: fixed;
}

.c-name {
  width: 220px;
}

.c-button {
  width: 13px;
}

.props th,
.props td {
  height: 19px;
  padding: 0 0 0 1px;
  border-bottom: 1px solid #d4d4d4;
  font-weight: normal;
  line-height: 18px;
  text-align: left;
  white-space: nowrap;
}

.props th {
  padding-left: 8px;
}

.props td {
  border-left: 1px solid #c8c8c8;
}

.props td:last-child {
  padding: 0;
}

.props .group th {
  position: relative;
  padding-left: 1px;
  background: #dadada;
}

.props .edit {
  padding: 0;
  border-left: 0;
}

.props input {
  display: block;
  width: 100%;
  height: 18px;
  padding: 0 1px;
  border: 1px solid #444;
  background: #fff;
  color: inherit;
  font: inherit;
}

.props td button {
  display: block;
  width: 12px;
  height: 18px;
  background: #e0e0e0;
  border: 1px solid #b4b4b4;
  border-width: 0 1px 1px 0;
}

.fold {
  position: absolute;
  top: 2px;
  right: 3px;
  width: 4px;
  height: 5px;
  background: #333;
  clip-path: polygon(50% 0, 100% 40%, 70% 40%, 50% 20%, 60% 50%, 100% 100%, 70% 100%, 50% 70%, 30% 100%, 0 100%, 40% 50%, 50% 20%, 30% 40%, 0 40%);
}

.masked {
  display: inline-block;
  width: 20px;
  height: 13px;
  background: #dcdcdc;
  vertical-align: -3px;
}

.documents {
  display: flex;
  flex-direction: column;
  flex: 1;
  min-width: 0;
  padding-left: 2px;
  background: #fff;
}

.defs {
  position: absolute;
}

.doc-tabs {
  display: flex;
  flex: none;
  height: 21px;
  margin-left: -2px;
  padding-left: 2px;
  background: #cbcbcb;
}

.doc-tabs button {
  display: flex;
  align-items: center;
  width: 128px;
  gap: 7px;
  padding: 0 5px 0 4px;
  color: #4d4d4d;
}

.doc-tabs button:not(.active) svg {
  opacity: .55;
}

.doc-tabs .active {
  background: #fff;
  color: #222;
  font-weight: bold;
}

.doc-tabs .x {
  margin-left: auto;
}

.view {
  flex: 1;
  min-height: 0;
  border-top: 2px solid #fff;
  background: linear-gradient(#f2f2f2, #d3d3d3);
}

#model {
  width: 100%;
  height: 100%;
}

#model path,
#model ellipse {
  stroke: rgba(60, 35, 25, .7);
  stroke-width: 1;
  stroke-linejoin: round;
}

#model .top { fill: rgba(247, 180, 125, .42); }
#model .side { fill: rgba(246, 175, 140, .42); }
#model .front { fill: rgba(248, 168, 145, .42); }
#model .edge { fill: none; }
#model .fill { stroke: none; }

#model .strong .top { fill: rgba(240, 150, 85, .65); }
#model .strong .side { fill: rgba(240, 140, 90, .65); }
#model .strong .front { fill: rgba(245, 135, 100, .65); }

#model .selected .top { fill: rgba(190, 225, 240, .5); }
#model .selected .side { fill: rgba(180, 215, 250, .5); }
#model .selected .front { fill: rgba(180, 190, 240, .5); }
#model .selected path { stroke: #4a72d0; }
```
FILE: script.js
```javascript
var NS = "http://www.w3.org/2000/svg";
var model = document.getElementById("model");

// left, back and right corner of the top face, then the height
var boxes = [
  { a: [102, 323], b: [115, 317], c: [139, 345], h: 5 },
  { a: [306, 327], b: [322, 320], c: [338, 338], h: 5 },
  { a: [330, 363], b: [346, 356], c: [379, 393], h: 22, kind: "selected" },
  { a: [382, 426], b: [399, 419], c: [421, 444], h: 16 },
  { a: [417, 454], b: [434, 447], c: [442, 457], h: 5 },
  { a: [479, 371], b: [515, 355], c: [529, 371], h: 16, kind: "strong" },
  { a: [530, 346], b: [583, 323], c: [597, 339], h: 22 },
  { a: [185, 426], b: [198, 421], c: [230, 457], h: 22 },
  { a: [244, 497], b: [257, 491], c: [273, 509], h: 16 },
  { a: [312, 570], b: [325, 565], c: [339, 581], h: 20 },
  { a: [368, 512], b: [397, 499], c: [430, 537], h: 11 },
  { a: [362, 627], b: [375, 622], c: [389, 638], h: 20 },
  { a: [379, 639], b: [392, 633], c: [400, 643], h: 5 },
  { a: [549, 94], b: [575, 83], c: [589, 99], h: 22 },
  { a: [700, 271], b: [733, 258], c: [747, 273], h: 22 },
  { a: [30, 799], b: [50, 791], c: [64, 807], h: 22 }
];

// centres of both end faces
var pipes = [
  { from: [210, 720], to: [210, 737], rx: 8, ry: 5, turn: 0 },
  { from: [730, 19], to: [744, 35], rx: 8, ry: 5, turn: -40 },
  { from: [884, 195], to: [898, 211], rx: 8, ry: 5, turn: -40 }
];

function add(parent, tag, attrs) {
  var el = document.createElementNS(NS, tag);
  for (var key in attrs) {
    el.setAttribute(key, attrs[key]);
  }
  parent.appendChild(el);
  return el;
}

function face(points) {
  return "M" + points.map(function (p) { return p.join(" "); }).join("L") + "Z";
}

function down(p, h) {
  return [p[0], p[1] + h];
}

boxes.forEach(function (box) {
  var a = box.a, b = box.b, c = box.c, h = box.h;
  var d = [a[0] + c[0] - b[0], a[1] + c[1] - b[1]];
  var g = add(model, "g", { "class": box.kind || "", transform: "translate(.5 .5)" });

  add(g, "path", { "class": "top", d: face([a, b, c, d]) });
  add(g, "path", { "class": "side", d: face([a, d, down(d, h), down(a, h)]) });
  add(g, "path", { "class": "front", d: face([d, c, down(c, h), down(d, h)]) });
  add(g, "path", { "class": "edge", d: "M" + down(a, h) + "L" + down(b, h) + "L" + down(c, h) + "M" + b + "L" + down(b, h) });
});

pipes.forEach(function (pipe) {
  var f = pipe.from, t = pipe.to;
  var r = pipe.turn * Math.PI / 180;
  var dx = pipe.rx * Math.cos(r), dy = pipe.rx * Math.sin(r);
  var f1 = [f[0] - dx, f[1] - dy], f2 = [f[0] + dx, f[1] + dy];
  var t1 = [t[0] - dx, t[1] - dy], t2 = [t[0] + dx, t[1] + dy];
  var g = add(model, "g", {});

  add(g, "path", { "class": "side fill", d: face([f1, f2, t2, t1]) });
  add(g, "path", { "class": "edge", d: "M" + f1 + "L" + t1 + "M" + f2 + "L" + t2 });
  [f, t].forEach(function (p) {
    add(g, "ellipse", {
      "class": "top", cx: p[0], cy: p[1], rx: pipe.rx, ry: pipe.ry,
      transform: "rotate(" + pipe.turn + " " + p[0] + " " + p[1] + ")"
    });
  });
});
```
